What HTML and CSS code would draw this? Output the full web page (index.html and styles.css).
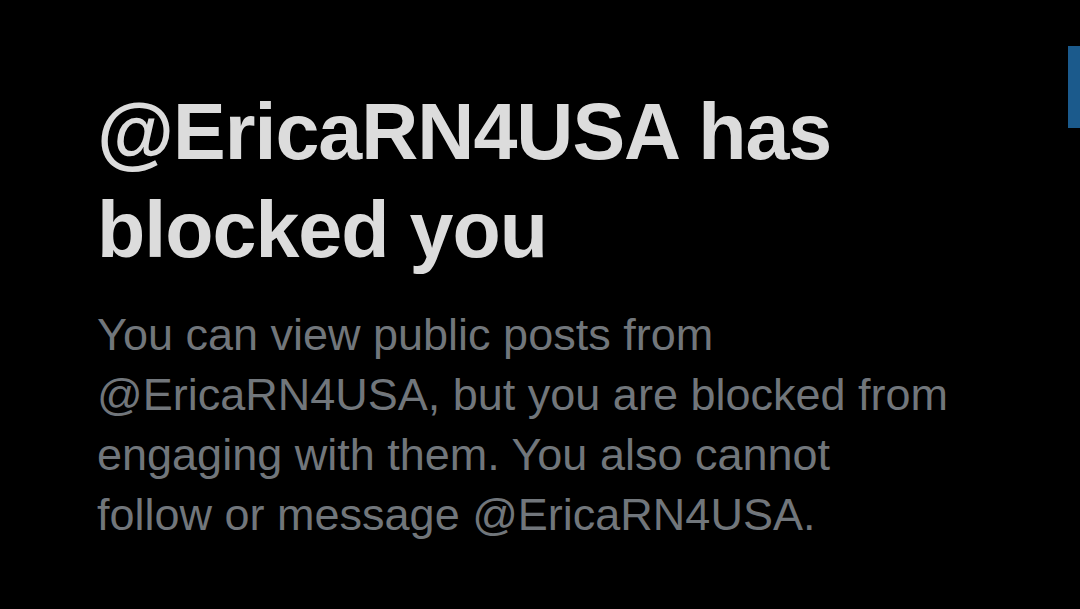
FILE: index.html
```html
<!DOCTYPE html>
<html>
<head>
<meta charset="utf-8">
<link rel="stylesheet" href="styles.css">
</head>
<body>
<div class="page">
  <main class="notice">
    <h1 class="title">@EricaRN4USA has blocked you</h1>
    <p class="body">You can view public posts from @EricaRN4USA, but you are blocked from engaging with them. You also cannot follow or message @EricaRN4USA.</p>
  </main>
  <div class="scroll-thumb"></div>
</div>
</body>
</html>
```

FILE: styles.css
```css
html, body {
  margin: 0;
  padding: 0;
  background: #000;
  width: 1080px;
  height: 609px;
  overflow: hidden;
}
.page {
  position: relative;
  width: 1080px;
  height: 609px;
  display: flex;
}
.notice {
  padding: 83px 0 0 97px;
  width: 880px;
  font-family: "Liberation Sans", Arial, sans-serif;
}
.title {
  margin: 0;
  color: #dcdcdc;
  font-size: 79px;
  line-height: 98px;
  font-weight: 700;
  letter-spacing: -1px;
}
.body {
  margin: 26px 0 0 0;
  max-width: 855px;
  color: #71767b;
  font-size: 45px;
  line-height: 60px;
  font-weight: 400;
}
.scroll-thumb {
  position: absolute;
  right: 0;
  top: 46px;
  width: 12px;
  height: 82px;
  background: #1b5a8c;
}
```
